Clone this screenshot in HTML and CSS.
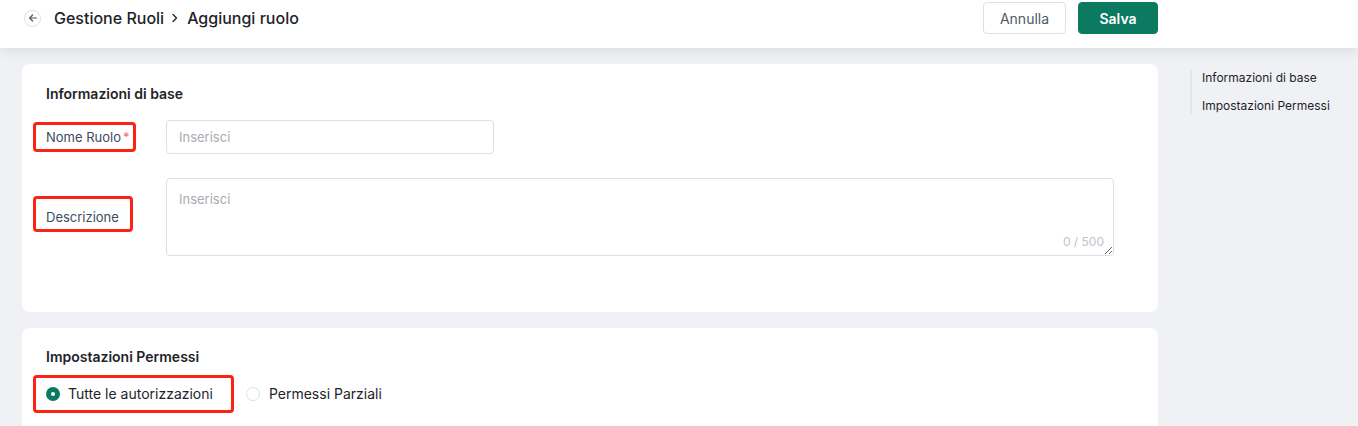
FILE: index.html
```html
<!DOCTYPE html>
<html lang="it">
<head>
    <meta charset="UTF-8">
    <meta name="viewport" content="width=device-width, initial-scale=1.0">
    <title>Aggiungi ruolo</title>
    <link rel="stylesheet" href="styles.css">
</head>
<body>
    <div class="header">
        <div class="crumbs">
            <span class="back">
                <svg width="10" height="10" viewBox="0 0 10 10"><path d="M8.6 5H1.6M4.6 2 1.6 5l3 3" fill="none" stroke="#4e5969" stroke-width="1.2" stroke-linecap="round" stroke-linejoin="round"/></svg>
            </span>
            <span class="crumb">Gestione Ruoli</span>
            <svg class="sep" width="8" height="10" viewBox="0 0 8 10"><path d="M2 1.5 5.5 5 2 8.5" fill="none" stroke="#1f2329" stroke-width="1.3" stroke-linecap="round" stroke-linejoin="round"/></svg>
            <span class="crumb">Aggiungi ruolo</span>
        </div>
        <div class="actions">
            <button class="button cancel-button">Annulla</button>
            <button class="button save-button">Salva</button>
        </div>
    </div>
    <div class="page">
        <div class="main">
            <div class="card">
                <div class="card-title">Informazioni di base</div>
                <div class="form-row">
                    <div class="label"><span class="mark mark-name">Nome Ruolo <i class="req">*</i></span></div>
                    <input class="input" type="text" placeholder="Inserisci">
                </div>
                <div class="form-row form-row-top">
                    <div class="label"><span class="mark mark-desc">Descrizione</span></div>
                    <div class="textarea-wrap">
                        <textarea class="textarea" placeholder="Inserisci"></textarea>
                        <span class="counter">0 / 500</span>
                    </div>
                </div>
            </div>
            <div class="card card-perm">
                <div class="card-title">Impostazioni Permessi</div>
                <div class="radio-row">
                    <span class="mark mark-radio">
                        <span class="radio checked"></span>
                        <span class="radio-text">Tutte le autorizzazioni</span>
                    </span>
                    <span class="radio-option">
                        <span class="radio"></span>
                        <span class="radio-text">Permessi Parziali</span>
                    </span>
                </div>
            </div>
        </div>
        <div class="aside">
            <div class="nav">
                <div class="nav-item">Informazioni di base</div>
                <div class="nav-item">Impostazioni Permessi</div>
            </div>
        </div>
    </div>
</body>
</html>
```
FILE: styles.css
```css
body, html {
    margin: 0;
    padding: 0;
    height: 100%;
    font-family: Inter, 'Noto Sans', sans-serif;
    background-color: #f0f1f5;
    color: #1f2329;
    overflow: hidden;
}
.header {
    height: 48px;
    box-sizing: border-box;
    padding: 2px 200px 14px 24px;
    background-color: #fff;
    display: flex;
    align-items: center;
    justify-content: space-between;
    box-shadow: 0 3px 12px rgba(0, 0, 0, 0.09);
    position: relative;
}
.crumbs {
    display: flex;
    align-items: center;
}
.back {
    width: 17px;
    height: 17px;
    box-sizing: border-box;
    border: 1px solid #dcdfe6;
    border-radius: 50%;
    display: flex;
    align-items: center;
    justify-content: center;
    margin-right: 13px;
}
.crumb {
    font-size: 16px;
    font-weight: 500;
    line-height: 22px;
}
.sep {
    margin: 0 8px 0 7px;
}
.actions {
    display: flex;
    gap: 12px;
}
.button {
    height: 32px;
    box-sizing: border-box;
    font-family: inherit;
    font-size: 14px;
    border-radius: 4px;
    cursor: pointer;
}
.cancel-button {
    width: 83px;
    background-color: #fff;
    border: 1px solid #dcdfe6;
    color: #4e5969;
}
.save-button {
    width: 80px;
    background-color: #0b7a60;
    border: 1px solid #0b7a60;
    color: #fff;
    font-weight: 600;
}
.page {
    display: flex;
    padding: 16px 0 0 22px;
    gap: 32px;
}
.main {
    width: 1136px;
    display: flex;
    flex-direction: column;
    gap: 16px;
}
.card {
    background-color: #fff;
    border-radius: 8px;
    padding: 20px 24px 56px;
}
.card-perm {
    padding-top: 19px;
}
.card-title {
    font-size: 14px;
    font-weight: 600;
    line-height: 20px;
    margin-bottom: 16px;
}
.card-perm .card-title {
    margin-bottom: 8px;
}
.form-row {
    display: flex;
    align-items: center;
}
.form-row-top {
    align-items: flex-start;
    margin-top: 24px;
}
.label {
    width: 120px;
    flex-shrink: 0;
    font-size: 13px;
    color: #3d4b5c;
}
.mark {
    display: inline-flex;
    align-items: center;
    border: 3px solid #fa2314;
    border-radius: 4px;
    margin-left: -13px;
    line-height: 18px;
}
.mark-name {
    padding: 3px 3px 3px 10px;
}
.req {
    font-style: normal;
    color: #f56c6c;
    margin-left: 2px;
}
.mark-desc {
    padding: 9px 11px 3px 10px;
    margin-top: 18px;
}
.input {
    width: 328px;
    height: 34px;
    box-sizing: border-box;
    border: 1px solid #dcdfe6;
    border-radius: 4px;
    padding: 0 12px;
    font-family: inherit;
    font-size: 13px;
    outline: none;
}
.input::placeholder, .textarea::placeholder {
    color: #a8abb2;
}
.textarea-wrap {
    position: relative;
    width: 948px;
    height: 78px;
}
.textarea {
    width: 100%;
    height: 100%;
    box-sizing: border-box;
    border: 1px solid #dcdfe6;
    border-radius: 4px;
    padding: 10px 12px;
    font-family: inherit;
    font-size: 13px;
    line-height: 20px;
    outline: none;
    display: block;
}
.counter {
    position: absolute;
    right: 10px;
    bottom: 6px;
    font-size: 12px;
    line-height: 16px;
    color: #c0c4cc;
}
.radio-row {
    display: flex;
    align-items: center;
    gap: 12px;
}
.mark-radio {
    padding: 7px 18px 7px 10px;
    gap: 8px;
}
.radio-option {
    display: inline-flex;
    align-items: center;
    gap: 9px;
}
.radio {
    width: 14px;
    height: 14px;
    box-sizing: border-box;
    border: 1px solid #dcdfe6;
    border-radius: 50%;
    background-color: #fff;
    flex-shrink: 0;
}
.radio.checked {
    border: 5px solid #0b7a60;
}
.radio-text {
    font-size: 14px;
    line-height: 18px;
    color: #1f2329;
}
.aside {
    padding-top: 6px;
}
.nav {
    border-left: 2px solid #e4e6eb;
    padding: 0 0 0 10px;
}
.nav-item {
    font-size: 12px;
    line-height: 16px;
    padding: 0 0 12px;
}
.nav-item:last-child {
    padding-bottom: 0;
}
```
